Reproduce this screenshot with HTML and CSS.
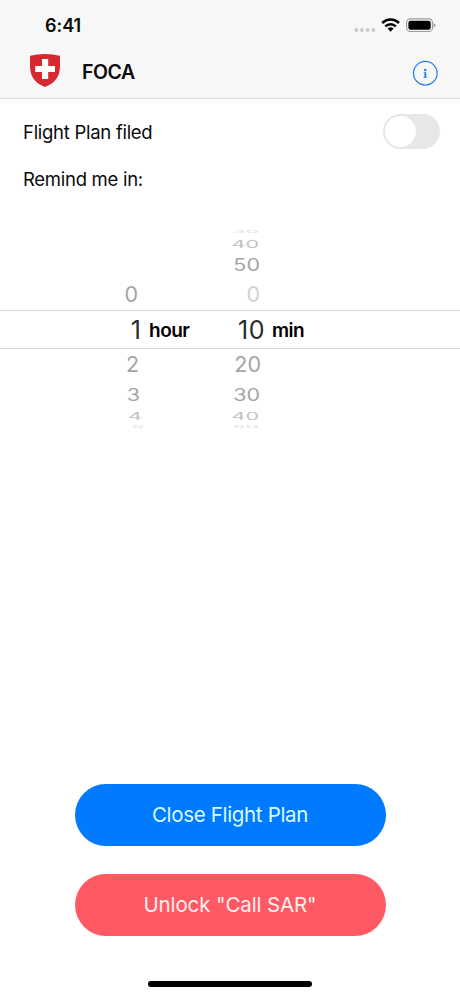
FILE: index.html
```html
<!DOCTYPE html>
<html lang="en">
<head>
<meta charset="utf-8">
<title>FOCA</title>
<link rel="stylesheet" href="styles.css">
</head>
<body>
<div class="screen">
  <header class="top">
    <div class="status">
      <span class="time">6:41</span>
      <svg class="indicators" width="84" height="20" viewBox="0 0 84 20">
        <g fill="#cacaca"><circle cx="3.2" cy="15" r="2"/><circle cx="8.9" cy="15" r="2"/><circle cx="14.6" cy="15" r="2"/><circle cx="20.3" cy="15" r="2"/></g>
        <g fill="none" stroke="#000" stroke-width="2.5"><path d="M29.2 8a12 12 0 0 1 16.8 0"/><path d="M32.3 11.3a7.6 7.6 0 0 1 10.6 0"/></g>
        <path d="M34.6 13.600a4.4 4.4 0 0 1 6 0l-3 3.1z"/>
        <rect x="53.6" y="3.900" width="25.9" height="12.6" rx="3.8" fill="none" stroke="#9c9c9c" stroke-width="1.2"/>
        <rect x="55.400" y="5.700" width="22.3" height="9" rx="2.2"/>
        <path d="M80.700 7.900q1.8.8 1.8 2.3t-1.8 2.3z" fill="#9c9c9c"/>
      </svg>
    </div>
    <div class="nav">
      <svg class="shield" width="32" height="34" viewBox="0 0 32 34">
        <path d="M1 2.800Q16-.9 31 2.800V13C31 23 26.5 30 16 34 5.500 30 1 23 1 13z" fill="#d8282f"/>
        <path d="M13 6h6.200v6.900H26v6.200h-6.800V26H13v-6.900H6.200v-6.200H13z" fill="#fff"/>
      </svg>
      <h1 class="title">FOCA</h1>
      <svg class="info" width="26" height="26" viewBox="0 0 26 26">
        <circle cx="13.3" cy="13.200" r="11.8" fill="none" stroke="#1c7df0" stroke-width="1.2"/>
        <circle cx="13.200" cy="9.900" r="1.250" fill="#1c7df0"/>
        <path d="M11.600 12.300h2.600v4.700h.9v.8h-3.600v-.8h.9v-3.900h-.8z" fill="#1c7df0"/>
      </svg>
    </div>
  </header>
  <main class="content">
    <div class="row"><span>Flight Plan filed</span><span class="toggle"><span class="knob"></span></span></div>
    <div class="remind">Remind me in:</div>
    <div class="picker">
      <div class="line far5"><span class="h"></span><span class="m"><b>30</b></span></div>
      <div class="line far4"><span class="h"></span><span class="m"><b>40</b></span></div>
      <div class="line far3"><span class="h"></span><span class="m"><b>50</b></span></div>
      <div class="line near"><span class="h"><b>0</b></span><span class="m faint"><b>0</b></span></div>
      <div class="line selected"><span class="h"><b>1</b></span><span class="unit hour">hour</span><span class="m"><b>10</b></span><span class="unit min">min</span></div>
      <div class="line near below"><span class="h"><b>2</b></span><span class="m"><b>20</b></span></div>
      <div class="line far3 below"><span class="h"><b>3</b></span><span class="m"><b>30</b></span></div>
      <div class="line far4 below"><span class="h"><b>4</b></span><span class="m"><b>40</b></span></div>
      <div class="line far5 below"><span class="h"><b>5</b></span><span class="m"><b>50</b></span></div>
    </div>
  </main>
  <footer class="actions">
    <button class="button close">Close Flight Plan</button>
    <button class="button unlock">Unlock "Call SAR"</button>
    <div class="home"></div>
  </footer>
</div>
</body>
</html>
```
FILE: styles.css
```css
* { box-sizing: border-box; }
body { margin: 0; background: #fff; color: #0a0a0a; font-family: Inter, "Liberation Sans", sans-serif; }
svg { display: block; flex: none; }
.screen { width: 460px; height: 996px; display: flex; flex-direction: column; overflow: hidden; }
.top { height: 99px; background: #f7f7f7; border-bottom: 1px solid #dedede; }
.status { height: 48px; padding: 15px 23px 0 45px; display: flex; justify-content: space-between; }
.time { font-size: 18px; line-height: 22px; font-weight: 600; letter-spacing: -0.05px; }
.nav { display: flex; align-items: flex-start; padding: 5px 22px 0 29px; }
.title { margin: 7px auto 0 21px; font-size: 19.5px; line-height: 24px; font-weight: 600; letter-spacing: -0.45px; }
.info { margin-top: 7px; }
.content { flex: 1; font-size: 18.5px; line-height: 24px; letter-spacing: -0.28px; }
.row { display: flex; justify-content: space-between; align-items: center; padding: 15px 20px 0 23px; height: 50px; }
.toggle { width: 57px; height: 35px; border-radius: 18px; background: #e7e7e9; padding: 2px; }
.knob { display: block; width: 31px; height: 31px; border-radius: 50%; background: #fff; }
.remind { padding: 18px 23px 0; height: 78px; }
.picker { height: 204px; overflow: hidden; color: #a5a5a5; font-size: 21.5px; letter-spacing: 0; }
.picker b { display: inline-block; font-weight: 400; line-height: 24px; }
.line { display: flex; align-items: center; overflow: hidden; }
.h { width: 138px; text-align: right; flex: none; }
.m { width: 122px; text-align: right; flex: none; }
.near { height: 32px; }
.near b { position: relative; top: -1px; }
.below.near .h { width: 139px; }
.faint { color: #d2d2d2; }
.far3 { height: 29px; }
.far3 b { transform: scaleY(.78); }
.far3.below { height: 27px; }
.far3 .h { width: 140px; }
.far3 .m { width: 120px; }
.far4 { height: 13px; color: #c2c2c2; }
.far4 b { transform: scaleY(.48); }
.far4.below { height: 15px; }
.far4 .h { width: 142px; }
.far4 .m { width: 117px; }
.far5 { height: 10px; color: #dedede; }
.far5 b { transform: scaleY(.16); }
.far5.below { height: 8px; }
.far5 .h { width: 144px; }
.far5 .m { width: 115px; }
.selected { height: 39px; margin: -1px 0 0; border: solid #d8d8d8; border-width: 1px 0; color: #2a2a2a; font-size: 25px; }
.selected .h { width: 141px; }
.selected .m { width: 75px; letter-spacing: 0.5px; }
.unit { font-size: 19px; line-height: 24px; font-weight: 600; letter-spacing: -0.5px; color: #000; margin-left: 8px; padding-top: 2px; }
.hour { width: 41px; }
.min { margin-left: 7px; }
.actions { height: 212px; display: flex; flex-direction: column; align-items: center; }
.button { width: 311px; height: 62px; margin: 0 0 28px; padding: 0; border: 0; border-radius: 31px; font: 400 20.5px/26px Inter, "Liberation Sans", sans-serif; }
.close { background: #007aff; color: #d9fbff; letter-spacing: -0.33px; }
.unlock { background: #ff5964; color: #fff0ee; letter-spacing: -0.12px; }
.home { width: 164px; height: 6px; border-radius: 3px; background: #000; margin-top: 17px; }
```
